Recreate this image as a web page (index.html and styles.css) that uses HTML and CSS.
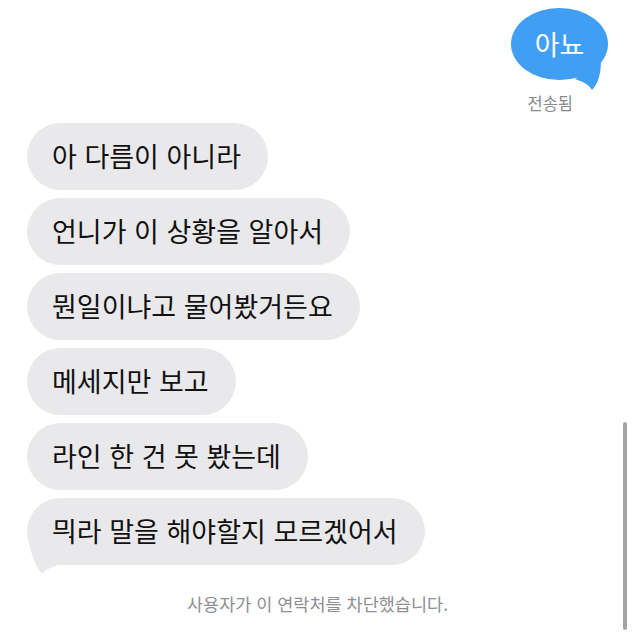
FILE: index.html
```html
<!DOCTYPE html>
<html lang="ko">
<head>
<meta charset="utf-8">
<title>Messages</title>
<link rel="stylesheet" href="styles.css">
</head>
<body>
<main class="thread">
  <div class="sent-group">
    <div class="bubble bubble-blue">아뇨
      <svg class="tail" viewBox="0 0 97 72" width="97" height="72" aria-hidden="true"><path d="M90 52 C90 66 87 76 81 82 C78 77 73 74 64 71 Z" fill="#419ff3"/></svg>
    </div>
    <div class="status">전송됨</div>
  </div>
  <div class="received-group">
    <div class="bubble bubble-gray">아 다름이 아니라</div>
    <div class="bubble bubble-gray">언니가 이 상황을 알아서</div>
    <div class="bubble bubble-gray">뭔일이냐고 물어봤거든요</div>
    <div class="bubble bubble-gray">메세지만 보고</div>
    <div class="bubble bubble-gray">라인 한 건 못 봤는데</div>
    <div class="bubble bubble-gray">뭐라 말을 해야할지 모르겠어서
      <svg class="tail" viewBox="0 0 100 67" width="100" height="67" aria-hidden="true"><path d="M1 36 C3 56 9 69 15 76 C20 71 27 67 42 65 L42 36 Z" fill="#e9e9eb"/></svg>
    </div>
  </div>
  <p class="notice">사용자가 이 연락처를 차단했습니다.</p>
</main>
<div class="scrollbar"></div>
</body>
</html>
```
FILE: styles.css
```css
html, body {
  margin: 0;
  padding: 0;
  background: #ffffff;
}

body {
  font-family: "Noto Sans CJK KR", "Noto Sans", sans-serif;
  width: 634px;
  height: 644px;
  overflow: hidden;
  position: relative;
}

.thread {
  display: flex;
  flex-direction: column;
  padding: 8px 26px 0 27px;
}

.sent-group {
  display: flex;
  flex-direction: column;
  align-items: flex-end;
}

.bubble {
  position: relative;
  box-sizing: border-box;
  display: inline-flex;
  align-items: center;
  white-space: nowrap;
  font-size: 27px;
  line-height: 1;
}

.bubble .tail {
  position: absolute;
  left: 0;
  top: 0;
  overflow: visible;
  pointer-events: none;
}

.bubble-blue {
  width: 97px;
  height: 72px;
  justify-content: center;
  background: #419ff3;
  color: #ffffff;
  border-radius: 48px / 36px;
  padding-bottom: 2px;
}

.status {
  margin-top: 14px;
  margin-right: 35px;
  font-size: 16.5px;
  line-height: 19px;
  color: #8a8a8e;
}

.received-group {
  display: flex;
  flex-direction: column;
  align-items: flex-start;
  gap: 8px;
  margin-top: 10px;
}

.bubble-gray {
  height: 67px;
  padding: 0 27px 2px 25px;
  background: #e9e9eb;
  color: #111111;
  border-radius: 34px;
}

.notice {
  margin: 28px 0 0;
  text-align: center;
  font-size: 17.5px;
  line-height: 21px;
  color: #8e8e93;
}

.scrollbar {
  position: absolute;
  left: 623px;
  top: 422px;
  width: 4px;
  height: 208px;
  border-radius: 2px;
  background: #a3a3a3;
}
```
